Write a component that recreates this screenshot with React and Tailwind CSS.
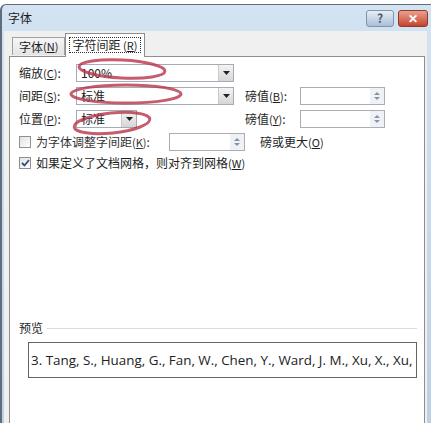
import React from 'react';

const font = { fontFamily: '"Noto Sans CJK SC", "Liberation Sans", sans-serif' };

function Key({ children }) {
  return (
    <span className="text-[11px]">
      (<span className="underline">{children}</span>)
    </span>
  );
}

function Arrow() {
  return (
    <div className="flex h-full w-[15px] items-center justify-center border-l border-[#c9c9c9] bg-gradient-to-b from-[#f4f4f4] to-[#d6d6d6]">
      <svg width="7" height="4" viewBox="0 0 7 4">
        <path d="M0 0h7L3.5 4z" fill="#222" />
      </svg>
    </div>
  );
}

function Select({ value, className }) {
  return (
    <div className={`flex h-[18px] items-center border border-[#a5acb5] bg-white pl-1 ${className}`}>
      <span className="flex-1 text-[12px] leading-none text-[#222]">{value}</span>
      <Arrow />
    </div>
  );
}

function Spinner({ className }) {
  return (
    <div className={`flex h-[18px] items-center justify-end border border-[#abadb3] bg-white ${className}`}>
      <div className="flex h-full w-[14px] flex-col items-center justify-center gap-[2px] bg-[#eef1f5]">
        <svg width="6" height="3" viewBox="0 0 6 3"><path d="M0 3h6L3 0z" fill="#8a94a0" /></svg>
        <svg width="6" height="3" viewBox="0 0 6 3"><path d="M0 0h6L3 3z" fill="#8a94a0" /></svg>
      </div>
    </div>
  );
}

export default function App() {
  return (
    <div className="relative h-[423px] w-[431px] overflow-hidden bg-white text-[12px] text-[#1e1e1e]" style={font}>
      <div className="mt-[4px] h-[419px] rounded-tl-[6px] border-l-2 border-t border-[#5f6d7d] bg-gradient-to-b from-[#d4e3f2] to-[#bcd0e6]">
        <div className="flex h-[26px] items-center justify-between pl-[6px] pr-[3px]">
          <span className="text-[12px] text-[#1b1b1b]">字体</span>
          <div className="flex items-center gap-[4px]">
            <div className="flex h-[17px] w-[28px] items-center justify-center rounded-[3px] border border-[#7f95ac] bg-gradient-to-b from-[#e6eef7] to-[#a9bfd8] text-[12px] font-bold text-[#4d5a68]">?</div>
            <div className="flex h-[17px] w-[30px] items-center justify-center rounded-[3px] border border-[#8b3a2e] bg-gradient-to-b from-[#e9a08f] to-[#c5412b] text-[12px] font-bold text-white">✕</div>
          </div>
        </div>
        <div className="mr-[4px] ml-[2px] h-[393px] bg-[#f0f0f0] pl-[5px] pr-[2px] pt-[2px]">
          <div className="flex items-end">
            <div className="mb-[1px] ml-[3px] flex h-[18px] items-center border border-b-0 border-[#a0a0a0] bg-gradient-to-b from-[#f6f6f6] to-[#e4e4e4] px-[6px] text-[12px]">
              字体 <Key>N</Key>
            </div>
            <div className="relative z-10 -mb-[1px] flex h-[24px] items-center border border-b-0 border-[#8e8e8e] bg-white px-[3px] pb-[2px]">
              <span className="border border-dotted border-[#333] px-[2px] leading-[14px]">
                字符间距 <Key>R</Key>
              </span>
            </div>
          </div>
          <div className="h-[370px] border border-[#8e8e8e] bg-white pt-[5px] pl-[9px] pr-[7px]">
            <div className="flex h-[22px] items-center">
              <span className="w-[57px]">缩放<Key>C</Key>:</span>
              <Select value="100%" className="w-[158px]" />
            </div>
            <div className="flex h-[23px] items-center">
              <span className="w-[57px]">间距<Key>S</Key>:</span>
              <Select value="标准" className="w-[158px]" />
              <span className="ml-[11px] w-[55px]">磅值<Key>B</Key>:</span>
              <Spinner className="w-[85px]" />
            </div>
            <div className="flex h-[24px] items-center">
              <span className="w-[57px]">位置<Key>P</Key>:</span>
              <Select value="标准" className="w-[61px]" />
              <span className="ml-[108px] w-[55px]">磅值<Key>Y</Key>:</span>
              <Spinner className="w-[85px]" />
            </div>
            <div className="flex h-[22px] items-center">
              <span className="mr-[5px] h-[12px] w-[12px] border border-[#8f8f8f] bg-gradient-to-br from-[#e2e2e2] to-white" />
              <span className="w-[133px] text-[#333]">为字体调整字间距<Key>K</Key>:</span>
              <Spinner className="w-[76px]" />
              <span className="ml-[15px]">磅或更大<Key>O</Key></span>
            </div>
            <div className="flex h-[20px] items-center">
              <span className="mr-[5px] flex h-[12px] w-[12px] items-center justify-center border border-[#8f8f8f] bg-gradient-to-br from-[#e2e2e2] to-white">
                <svg width="9" height="8" viewBox="0 0 9 8"><path d="M1 4l2.5 2.5L8 1" stroke="#2d4d7a" strokeWidth="1.8" fill="none" /></svg>
              </span>
              <span>如果定义了文档网格，则对齐到网格<Key>W</Key></span>
            </div>
            <div className="mt-[146px] flex items-center">
              <span>预览</span>
              <div className="ml-[4px] h-px flex-1 bg-[#dcdcdc]" />
            </div>
            <div className="ml-[9px] mt-[5px] flex h-[36px] items-center overflow-hidden whitespace-nowrap border border-[#646464] pl-[2px]">
              <span className="text-[13.4px] text-[#222]" style={{ fontFamily: '"Open Sans", "Liberation Sans", sans-serif' }}>
                3. Tang, S., Huang, G., Fan, W., Chen, Y., Ward, J. M., Xu, X., Xu,
              </span>
            </div>
          </div>
        </div>
      </div>
      <svg className="pointer-events-none absolute left-0 top-0" width="431" height="423" viewBox="0 0 431 423">
        <g fill="none" stroke="#b8344a" strokeWidth="3" opacity="0.8">
          <ellipse cx="122" cy="69" rx="43" ry="9" transform="rotate(3 122 69)" />
          <ellipse cx="126" cy="94" rx="55" ry="9" />
          <ellipse cx="112" cy="123" rx="38" ry="10" transform="rotate(-6 112 123)" />
        </g>
      </svg>
    </div>
  );
}
